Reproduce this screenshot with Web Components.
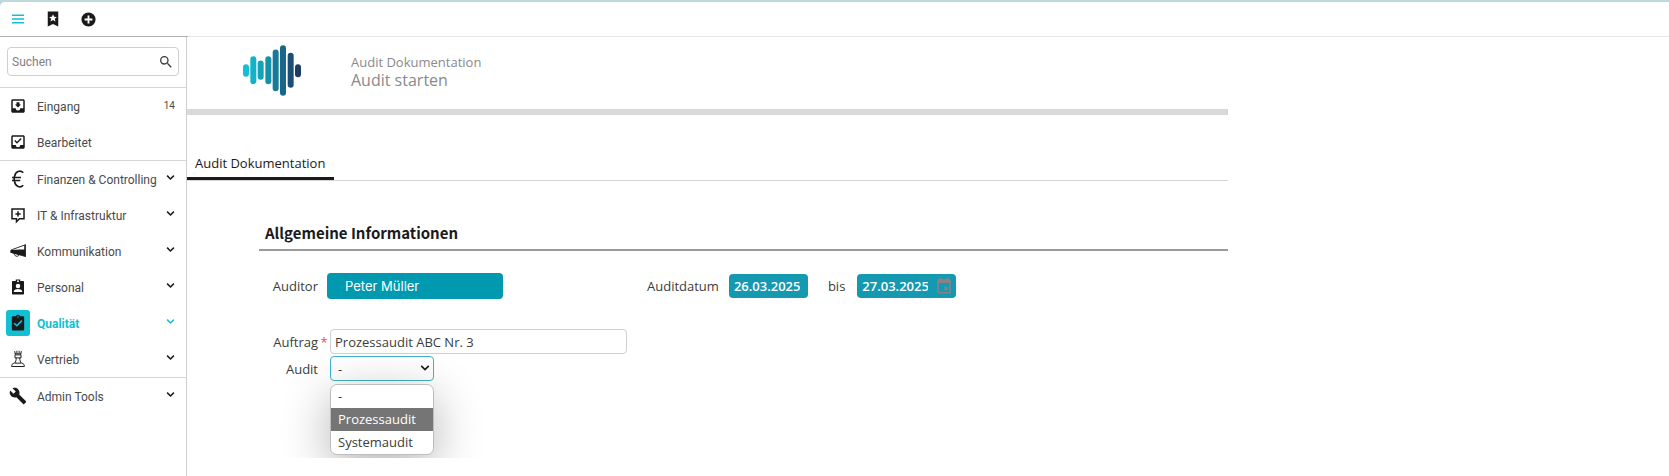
<!DOCTYPE html>
<html lang="de">
<head>
  <meta charset="utf-8">
  <title>Audit Dokumentation</title>
  <style>
    :root {
      --color-accent: #12bfd3;
      --color-petrol: #0099b0;
      --color-date: #1599b1;
      --color-frame: #bfdade;
      --color-line: #d5d5d5;
      --color-text: #3c3c3c;
      --color-ink: #1a1a1a;
      --font-ui: "Open Sans", "Noto Sans", sans-serif;
      --font-nav: "Roboto", sans-serif;
    }

    body {
      margin: 0;
      background: var(--color-frame);
      color: var(--color-text);
      font-family: var(--font-ui);
      font-size: 13px;
      line-height: 18px;
    }
  </style>
</head>
<body>
  <app-shell>
    <app-topbar slot="top"></app-topbar>

    <app-sidebar slot="side">
      <nav-group>
        <nav-item icon="inbox-down" count="14">Eingang</nav-item>
        <nav-item icon="inbox-check">Bearbeitet</nav-item>
      </nav-group>
      <nav-group>
        <nav-item icon="euro" expandable>Finanzen &amp; Controlling</nav-item>
        <nav-item icon="message-plus" expandable>IT &amp; Infrastruktur</nav-item>
        <nav-item icon="megaphone" expandable>Kommunikation</nav-item>
        <nav-item icon="badge" expandable>Personal</nav-item>
        <nav-item icon="clipboard" expandable active>Qualität</nav-item>
        <nav-item icon="chess" expandable>Vertrieb</nav-item>
      </nav-group>
      <nav-group>
        <nav-item icon="wrench" expandable>Admin Tools</nav-item>
      </nav-group>
    </app-sidebar>

    <page-header>
      <span slot="kicker">Audit Dokumentation</span>
      Audit starten
    </page-header>
    <tab-bar>Audit Dokumentation</tab-bar>
    <form-section>
      <span slot="title">Allgemeine Informationen</span>
      <form-row class="first">
        <text-field class="auditor" label="Auditor" value="Peter Müller" variant="person"></text-field>
        <text-field label="Auditdatum" value="26.03.2025" variant="date"></text-field>
        <text-field label="bis" value="27.03.2025" variant="date" picker></text-field>
      </form-row>
      <form-row>
        <text-field label="Auftrag" value="Prozessaudit ABC Nr. 3" required></text-field>
      </form-row>
      <form-row>
        <select-field label="Audit" options="-|Prozessaudit|Systemaudit" highlighted="1"></select-field>
      </form-row>
    </form-section>
  </app-shell>

  <script>
    const icons = {
      menu: '<path d="M4 6h16v1.900H4zM4 11h16v1.900H4zM4 16h16v1.900H4z"/>',
      'bookmark-star': '<path fill-rule="evenodd" d="M5 2h14v20l-7-3.500L5 22zM12 5.500l-1.500 3.400-3.700.3 2.800 2.400-.9 3.600L12 13.300l3.300 1.900-.9-3.600 2.800-2.400-3.700-.3z"/>',
      'plus-circle': '<path d="M12 2a10 10 0 1 0 0 20 10 10 0 0 0 0-20zm5.500 11.300h-4.200v4.200h-2.600v-4.200H6.500v-2.600h4.200V6.500h2.600v4.200h4.200z"/>',
      search: '<path d="M15.500 14h-.79l-.28-.27A6.470 6.470 0 0 0 16 9.500 6.500 6.500 0 1 0 9.500 16c1.610 0 3.090-.59 4.230-1.570l.27.28v.79l5 4.990L20.490 19zm-6 0a4.500 4.500 0 1 1 0-9 4.500 4.500 0 0 1 0 9z"/>',
      'inbox-down': '<path d="M19 3H5c-1.100 0-2 .9-2 2v14c0 1.100.9 2 2 2h14c1.100 0 2-.9 2-2V5c0-1.100-.9-2-2-2zm0 12h-4a3 3 0 0 1-6 0H5V5h14zm-3-5h-2V7h-4v3H8l4 4z"/>',
      'inbox-check': '<path d="M19 3H5c-1.100 0-2 .9-2 2v14c0 1.100.9 2 2 2h14c1.100 0 2-.9 2-2V5c0-1.100-.9-2-2-2zm0 13h-4a3 3 0 0 1-6 0H5V5h14zM16.900 8l-1.300-1.300-4.900 5-2.400-2.300L7 10.700l3.700 3.600z"/>',
      euro: '<path d="M19 3.700A7 8.500 0 0 0 7.500 8.500M19 20.300A7 8.500 0 0 1 7.500 15.500M7.500 8.500a10 10 0 0 0 0 7M4 10h12M4 14h11" fill="none" stroke="currentColor" stroke-width="2.200"/>',
      'message-plus': '<path d="M4 4h16v13h-6l-4 4v-4H4z" fill="none" stroke="currentColor" stroke-width="2"/><path d="M11 7h2v2.500h2.500v2H13V14h-2v-2.500H8.500v-2H11z"/>',
      megaphone: '<path d="M21 4v15L3 14v-3.500L4.500 10z" fill="none" stroke="currentColor" stroke-width="1.200"/><path d="M2 10.500l19-1V19L4 14.500H2zM21 3h1.500v17H21z"/><path d="M7 15c0 5 6 5 6 2" fill="none" stroke="currentColor" stroke-width="1.300"/>',
      badge: '<path fill-rule="evenodd" d="M5 4h4V2h6v2h4c.6 0 1 .4 1 1v16c0 .6-.4 1-1 1H5c-.6 0-1-.4-1-1V5c0-.6.400-1 1-1zm5.800-.7v2h2.400v-2zM12 7.500a3 3 0 1 0 0 6 3 3 0 0 0 0-6zM6.500 18.500h11v-1c0-2-3.500-3-5.500-3s-5.500 1-5.500 3z"/>',
      clipboard: '<path fill-rule="evenodd" d="M5.500 3h3.700a3 3 0 0 1 5.600 0h3.700c1 0 1.700.8 1.700 1.800v15.400c0 1-.7 1.800-1.700 1.800h-13c-1 0-1.700-.8-1.700-1.800V4.800c0-1 .7-1.800 1.700-1.800zM12 3a1 1 0 1 0 0 2 1 1 0 0 0 0-2zM18 9.500L16.500 8l-6 6-3-2.500L6 13l4.500 4z"/>',
      chess: '<path d="M8 5h8M7.500 1.500l1 5h7l1-5M10.500 1v3M13.500 1v3M8 6.500v4h8v-4M9.500 10.500c.3 3-.5 5-2 7h9c-1.500-2-2.300-4-2-7M7 17.500c-2.500.5-3.500 2-3.500 4.500h17c0-2.500-1-4-3.500-4.500" fill="none" stroke="currentColor" stroke-width="1.300"/>',
      wrench: '<path d="M22.700 19l-9.100-9.100c.9-2.300.4-5-1.500-6.900-2-2-5-2.400-7.400-1.300L9 6 6 9 1.600 4.700C.4 7.100.9 10.100 2.900 12.100c1.900 1.900 4.600 2.400 6.900 1.500l9.100 9.100c.4.4 1 .4 1.400 0l2.300-2.300c.5-.4.5-1.100.1-1.400z"/>',
      chevron: '<path d="M3 7l9 9 9-9" fill="none" stroke="currentColor" stroke-width="4"/>',
      calendar: '<path fill-rule="evenodd" d="M6 1h2.500v2h7V1H18v2h1c1.100 0 2 .9 2 2v15c0 1.100-.9 2-2 2H5c-1.100 0-2-.9-2-2V5c0-1.100.9-2 2-2h1zM5 8v12h14V8zm7.500 5H17v4.500h-4.500z"/>',
    };

    function svg(name, size) {
      return `<svg width="${size}" height="${size}" viewBox="0 0 24 24" fill="currentColor" aria-hidden="true">${icons[name]}</svg>`;
    }

    class BaseElement extends HTMLElement {
      connectedCallback() {
        if (this.shadowRoot) {
          return;
        }
        this.attachShadow({ mode: 'open' });
        this.shadowRoot.innerHTML = `<style>* { box-sizing: border-box; } svg { display: block; }</style>${this.render()}`;
      }
    }

    class AppShell extends BaseElement {
      render() {
        return `
          <style>
            :host {
              display: flex;
              flex-direction: column;
              min-height: 100vh;
              padding-top: 2px;
              box-sizing: border-box;
            }

            .body {
              flex: 1;
              display: grid;
              grid-template-columns: 187px 1fr;
              background: #fff;
            }

            .stage {
              display: grid;
              grid-template-columns: 26fr 11fr;
              align-items: start;
            }

            main {
              min-width: 0;
            }
          </style>
          <slot name="top"></slot>
          <div class="body">
            <slot name="side"></slot>
            <div class="stage">
              <main><slot></slot></main>
            </div>
          </div>
        `;
      }
    }

    class AppTopbar extends BaseElement {
      render() {
        return `
          <style>
            :host {
              display: block;
              background: #fff;
              border-radius: 5px 0 0 0;
            }

            .bar {
              display: flex;
              align-items: center;
              gap: 11px;
              height: 34px;
              padding: 0 6px;
            }

            button {
              display: grid;
              place-items: center;
              width: 24px;
              height: 24px;
              padding: 0;
              border: 0;
              background: none;
              color: var(--color-ink);
              cursor: pointer;
            }

            .menu {
              color: var(--color-accent);
            }

            .line {
              display: grid;
              grid-template-columns: 188px 1fr;
              height: 1px;
              background: #e6e6e6;
            }

            .line::before {
              content: '';
              background: #b0b0b0;
            }
          </style>
          <div class="bar">
            <button class="menu" aria-label="Menü">${svg('menu', 18)}</button>
            <button aria-label="Favoriten">${svg('bookmark-star', 18)}</button>
            <button aria-label="Neu">${svg('plus-circle', 17)}</button>
          </div>
          <div class="line"></div>
        `;
      }
    }

    class AppSidebar extends BaseElement {
      render() {
        return `
          <style>
            :host {
              display: block;
              border-right: 1px solid #cfcfcf;
              font-family: var(--font-nav);
              font-size: 12px;
            }

            label {
              display: flex;
              align-items: center;
              height: 29px;
              margin: 10px 7px 11px;
              padding: 0 4px;
              border: 1px solid #cfcfcf;
              border-radius: 4px;
            }

            input {
              flex: 1;
              min-width: 0;
              padding: 0;
              border: 0;
              outline: 0;
              font: inherit;
            }

            input::placeholder {
              color: #808080;
            }
          </style>
          <label>
            <input type="text" placeholder="Suchen" aria-label="Suchen">
            ${svg('search', 16)}
          </label>
          <slot></slot>
        `;
      }
    }

    class NavGroup extends BaseElement {
      render() {
        return `
          <style>
            :host {
              display: block;
              border-top: 1px solid var(--color-line);
            }
          </style>
          <slot></slot>
        `;
      }
    }

    class NavItem extends BaseElement {
      render() {
        const count = this.getAttribute('count');
        return `
          <style>
            :host {
              display: block;
            }

            a {
              display: flex;
              align-items: center;
              gap: 7px;
              height: 36px;
              padding: 0 11px 0 6px;
              color: #4a4a4a;
              text-decoration: none;
            }

            .icon {
              display: grid;
              place-items: center;
              width: 24px;
              height: 26px;
              border-radius: 3px;
              color: var(--color-ink);
            }

            .text {
              flex: 1;
              padding-top: 2px;
              white-space: nowrap;
            }

            .count {
              font-size: 10px;
            }

            .chevron {
              padding-bottom: 3px;
              color: var(--color-ink);
            }

            :host([active]) .icon {
              background: var(--color-accent);
            }

            :host([active]) .text {
              font-weight: bold;
            }

            :host([active]) .text,
            :host([active]) .chevron {
              color: var(--color-accent);
            }
          </style>
          <a href="#">
            <span class="icon">${svg(this.getAttribute('icon'), 18)}</span>
            <span class="text"><slot></slot></span>
            ${count ? `<span class="count">${count}</span>` : ''}
            ${this.hasAttribute('expandable') ? `<span class="chevron">${svg('chevron', 9)}</span>` : ''}
          </a>
        `;
      }
    }

    class PageHeader extends BaseElement {
      render() {
        // x, y, height and colour of every bar in the wave logo
        const bars = [
          [0, 57, 38, '#14bfd3'],
          [22, 33, 84, '#12b2c8'],
          [44, 46, 58, '#16a3b9'],
          [67, 33, 84, '#1790aa'],
          [89, 13, 125, '#187a99'],
          [111, 0, 152, '#1a6688'],
          [134, 23, 105, '#1a5077'],
          [156, 57, 39, '#1b3c66'],
        ];
        const rects = bars
          .map(([x, y, h, fill]) => `<rect x="${x}" y="${y}" width="18" height="${h}" rx="9" fill="${fill}"/>`)
          .join('');
        return `
          <style>
            :host {
              display: flex;
              align-items: center;
              gap: 50px;
              height: 78px;
              padding: 0 56px 5px;
              border-bottom: 6px solid #d9d9d9;
              box-sizing: border-box;
              color: #8a8a8a;
            }

            h1 {
              margin: 0;
              font-size: 16px;
              font-weight: normal;
              line-height: 18px;
            }

            .kicker {
              display: block;
              font-size: 13px;
            }
          </style>
          <svg width="58" height="51" viewBox="0 0 174 152" role="img" aria-label="Logo">${rects}</svg>
          <h1><slot class="kicker" name="kicker"></slot><slot></slot></h1>
        `;
      }
    }

    class TabBar extends BaseElement {
      render() {
        return `
          <style>
            :host {
              display: flex;
              margin-top: 36px;
              border-bottom: 1px solid var(--color-line);
            }

            button {
              padding: 3px 9px 5px 8px;
              border: 0;
              border-bottom: 3px solid var(--color-ink);
              background: none;
              color: var(--color-ink);
              font: inherit;
            }
          </style>
          <button role="tab" aria-selected="true"><slot></slot></button>
        `;
      }
    }

    class FormSection extends BaseElement {
      render() {
        return `
          <style>
            :host {
              display: block;
              padding: 40px 0 75px 72px;
              overflow: hidden;
            }

            h2 {
              margin: 0 0 22px;
              padding: 0 6px 4px;
              border-bottom: 2px solid #9a9a9a;
              color: var(--color-ink);
              font-family: "Noto Sans CJK SC", sans-serif;
              font-size: 15px;
              font-weight: bold;
              line-height: 24px;
            }
          </style>
          <h2><slot name="title"></slot></h2>
          <slot></slot>
        `;
      }
    }

    class FormRow extends BaseElement {
      render() {
        return `
          <style>
            :host {
              display: flex;
              align-items: center;
              margin-bottom: 2px;
            }

            :host(.first) {
              margin-bottom: 30px;
            }

            ::slotted(.auditor) {
              margin-right: 144px;
            }
          </style>
          <slot></slot>
        `;
      }
    }

    const fieldStyle = `
      :host {
        display: flex;
        align-items: center;
      }

      label {
        min-width: 59px;
        text-align: right;
      }

      input, select {
        border: 1px solid #cfcfcf;
        border-radius: 4px;
        background: #fff;
        color: var(--color-text);
        font: inherit;
        outline: 0;
      }
    `;

    class TextField extends BaseElement {
      render() {
        const required = this.hasAttribute('required');
        return `
          <style>
            ${fieldStyle}

            .star {
              width: 12px;
              color: #f05050;
              text-align: center;
            }

            .box {
              display: flex;
              align-items: center;
            }

            input {
              width: 297px;
              height: 25px;
              padding: 0 4px;
            }

            :host([variant="person"]) input {
              width: 176px;
              height: 26px;
              margin-left: 9px;
              padding: 0 18px;
              border: 0;
              background: var(--color-petrol);
              color: #fff;
              font-family: Inter, sans-serif;
            }

            :host([variant="date"]) label {
              min-width: 0;
              margin-right: 10px;
            }

            :host([variant="date"][picker]) label {
              margin-right: 12px;
            }

            :host([variant="date"]) .box {
              margin-right: 20px;
              padding-right: 3px;
              border-radius: 4px;
              background: var(--color-date);
            }

            :host([variant="date"]) input {
              width: 76px;
              height: 24px;
              padding: 0 5px;
              border: 0;
              background: none;
              color: #fff;
              font-weight: 600;
            }

            .picker {
              margin-left: 2px;
              padding: 0;
              border: 0;
              background: none;
              color: #8c8084;
            }
          </style>
          <label for="field">${this.getAttribute('label')}</label>
          ${required ? '<span class="star">*</span>' : ''}
          <span class="box">
            <input id="field" type="text" value="${this.getAttribute('value')}">
            ${this.hasAttribute('picker') ? `<button class="picker" aria-label="Kalender">${svg('calendar', 18)}</button>` : ''}
          </span>
        `;
      }
    }

    class SelectField extends BaseElement {
      render() {
        const options = this.getAttribute('options').split('|');
        const highlighted = Number(this.getAttribute('highlighted'));
        return `
          <style>
            ${fieldStyle}

            .box {
              position: relative;
              margin-left: 12px;
            }

            select {
              display: block;
              width: 104px;
              height: 25px;
              padding: 0 7px;
              border-color: #3fb4c8;
              appearance: none;
            }

            .arrow {
              position: absolute;
              top: 7px;
              right: 4px;
              color: var(--color-ink);
              pointer-events: none;
            }

            ul {
              position: absolute;
              top: 28px;
              left: 0;
              width: 104px;
              margin: 0;
              padding: 0;
              border: 1px solid #bdbdbd;
              border-radius: 7px;
              background: #fff;
              list-style: none;
              box-shadow: 0 12px 48px rgba(0, 0, 0, 0.3);
              overflow: hidden;
            }

            li {
              height: 23px;
              padding: 0 7px;
              line-height: 23px;
            }

            li.highlighted {
              background: #757575;
              color: #fff;
            }
          </style>
          <label for="field">${this.getAttribute('label')}</label>
          <span class="box">
            <select id="field">${options.map((o) => `<option>${o}</option>`).join('')}</select>
            <span class="arrow">${svg('chevron', 10)}</span>
            <ul role="listbox">
              ${options.map((o, i) => `<li role="option" class="${i === highlighted ? 'highlighted' : ''}">${o}</li>`).join('')}
            </ul>
          </span>
        `;
      }
    }

    customElements.define('app-shell', AppShell);
    customElements.define('app-topbar', AppTopbar);
    customElements.define('app-sidebar', AppSidebar);
    customElements.define('nav-group', NavGroup);
    customElements.define('nav-item', NavItem);
    customElements.define('page-header', PageHeader);
    customElements.define('tab-bar', TabBar);
    customElements.define('form-section', FormSection);
    customElements.define('form-row', FormRow);
    customElements.define('text-field', TextField);
    customElements.define('select-field', SelectField);
  </script>
</body>
</html>
